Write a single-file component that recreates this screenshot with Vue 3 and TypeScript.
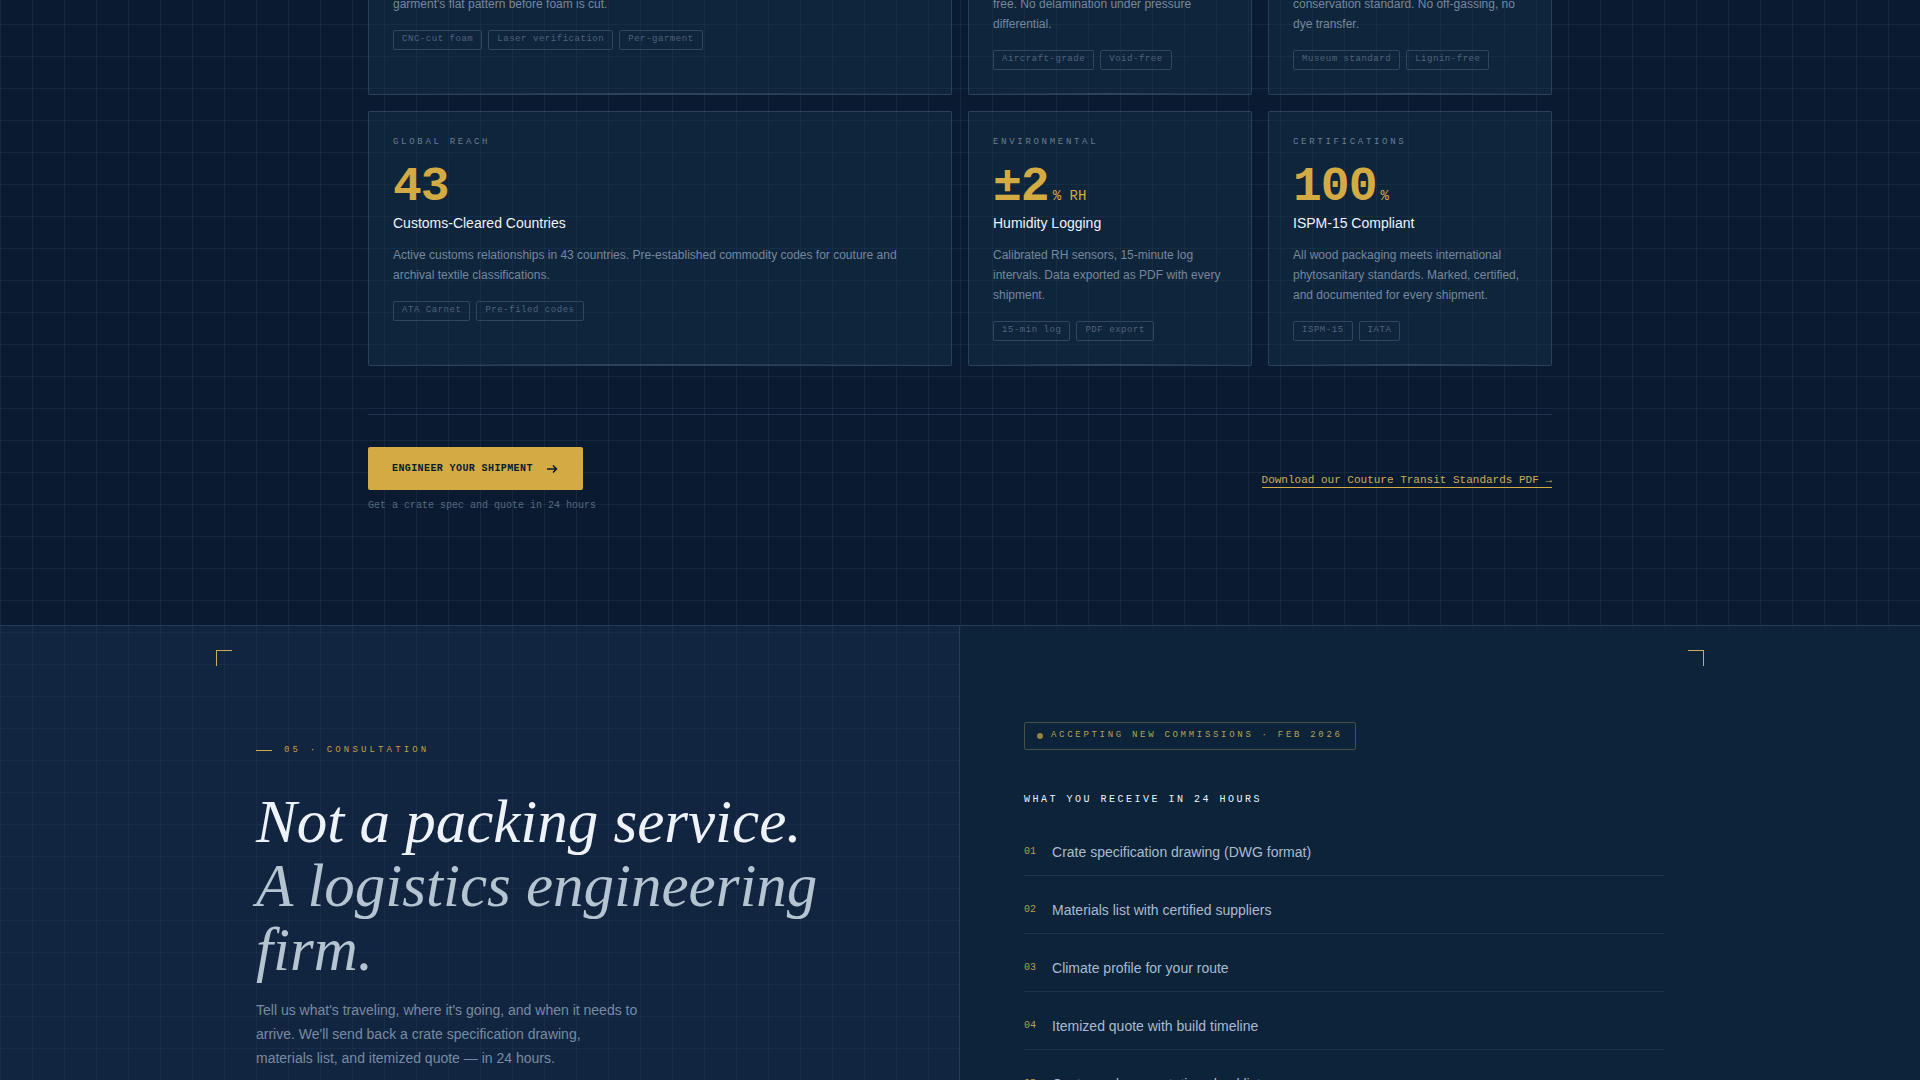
<script setup lang="ts">
interface Card {
  label?: string
  value?: string
  unit?: string
  title?: string
  text: string
  tags: string[]
  wide?: boolean
}

const topCards: Card[] = [
  {
    text: "garment's flat pattern before foam is cut.",
    tags: ['CNC-cut foam', 'Laser verification', 'Per-garment'],
    wide: true,
  },
  {
    text: 'free. No delamination under pressure differential.',
    tags: ['Aircraft-grade', 'Void-free'],
  },
  {
    text: 'conservation standard. No off-gassing, no dye transfer.',
    tags: ['Museum standard', 'Lignin-free'],
  },
]

const cards: Card[] = [
  {
    label: 'Global Reach',
    value: '43',
    title: 'Customs-Cleared Countries',
    text: 'Active customs relationships in 43 countries. Pre-established commodity codes for couture and archival textile classifications.',
    tags: ['ATA Carnet', 'Pre-filed codes'],
    wide: true,
  },
  {
    label: 'Environmental',
    value: '±2',
    unit: '% RH',
    title: 'Humidity Logging',
    text: 'Calibrated RH sensors, 15-minute log intervals. Data exported as PDF with every shipment.',
    tags: ['15-min log', 'PDF export'],
  },
  {
    label: 'Certifications',
    value: '100',
    unit: '%',
    title: 'ISPM-15 Compliant',
    text: 'All wood packaging meets international phytosanitary standards. Marked, certified, and documented for every shipment.',
    tags: ['ISPM-15', 'IATA'],
  },
]

const allCards: Card[] = [...topCards, ...cards]

const deliverables: string[] = [
  'Crate specification drawing (DWG format)',
  'Materials list with certified suppliers',
  'Climate profile for your route',
  'Itemized quote with build timeline',
  'Customs documentation checklist',
]
</script>

<template>
  <main class="page">
    <section class="specs">
      <div class="cards">
        <article v-for="(card, i) in allCards" :key="i" class="card" :class="{ wide: card.wide }">
          <p v-if="card.label" class="card-label">{{ card.label }}</p>
          <p v-if="card.value" class="card-value">
            {{ card.value }}<span v-if="card.unit" class="card-unit">{{ card.unit }}</span>
          </p>
          <h3 v-if="card.title" class="card-title">{{ card.title }}</h3>
          <p class="card-text">{{ card.text }}</p>
          <ul class="tags">
            <li v-for="tag in card.tags" :key="tag" class="tag">{{ tag }}</li>
          </ul>
        </article>
      </div>

      <div class="cta">
        <div class="cta-main">
          <button type="button" class="button">
            <span>Engineer your shipment</span>
            <svg class="arrow" viewBox="0 0 14 14" aria-hidden="true">
              <path d="M2 7h9.5M8 3.5 11.5 7 8 10.5" />
            </svg>
          </button>
          <p class="cta-note">Get a crate spec and quote in 24 hours</p>
        </div>
        <a class="download" href="#standards">Download our Couture Transit Standards PDF →</a>
      </div>
    </section>

    <section class="consult">
      <div class="panel panel-left">
        <div class="panel-body intro">
          <p class="eyebrow">05 · Consultation</p>
          <h2 class="headline">Not a packing service.<br /><span>A logistics engineering firm.</span></h2>
          <p class="lead">
            Tell us what's traveling, where it's going, and when it needs to arrive. We'll send back a
            crate specification drawing, materials list, and itemized quote — in 24 hours.
          </p>
        </div>
      </div>
      <div class="panel panel-right">
        <div class="panel-body offer">
          <p class="badge"><i class="dot"></i><span>Accepting new commissions · Feb 2026</span></p>
          <h3 class="offer-title">What you receive in 24 hours</h3>
          <ol class="list">
            <li v-for="(item, i) in deliverables" :key="item" class="list-item">
              <span class="list-number">0{{ i + 1 }}</span>
              <span>{{ item }}</span>
            </li>
          </ol>
        </div>
      </div>
      <div class="frame" aria-hidden="true">
        <i class="corner corner-left"></i>
        <i class="corner corner-right"></i>
      </div>
    </section>
  </main>
</template>

<style>
body {
  margin: 0;
  background: #0a1a30;
}
</style>

<style scoped>
.page {
  --gold: #d4aa43;
  --mono: "Liberation Mono", monospace;
  box-sizing: border-box;
  height: 100vh;
  overflow: hidden;
  font-family: "Liberation Sans", Arial, sans-serif;
  color: #eef3fa;
  background-color: #0a1b31;
  background-image:
    linear-gradient(rgba(160, 185, 205, 0.08) 1px, transparent 1px),
    linear-gradient(90deg, rgba(160, 185, 205, 0.08) 1px, transparent 1px);
  background-size: 32px 32px;
  background-position: 0 24px;
}

.page *,
.page *::before,
.page *::after {
  box-sizing: border-box;
}

p,
h2,
h3,
ul,
ol {
  margin: 0;
  padding: 0;
  font-weight: 400;
}

ul,
ol {
  list-style: none;
}

.specs {
  max-width: 1280px;
  margin: -31px auto 0;
  padding: 0 48px 111px;
}

.cards {
  display: grid;
  grid-template-columns: repeat(4, 1fr);
  gap: 16px;
}

.card {
  position: relative;
  padding: 24px;
  border: 1px solid rgba(130, 150, 180, 0.25);
  border-radius: 2px;
  background: rgba(23, 52, 77, 0.4);
}

.card.wide {
  grid-column: span 2;
}

.card::after {
  content: "";
  position: absolute;
  left: 0;
  right: 0;
  bottom: 0;
  height: 1px;
  background: linear-gradient(90deg, transparent, rgba(130, 150, 180, 0.3), transparent);
}

.card-label {
  margin-bottom: 15px;
  font: 9px/12px var(--mono);
  letter-spacing: 0.3em;
  text-transform: uppercase;
  color: #6b7d93;
}

.card-value {
  margin-bottom: 4px;
  font: 700 48px/48px var(--mono);
  letter-spacing: -0.02em;
  color: var(--gold);
}

.card-unit {
  margin-left: 4px;
  font-size: 14px;
  font-weight: 400;
  line-height: 14px;
  letter-spacing: 0;
}

.card-title {
  margin-bottom: 14px;
  font-size: 14px;
  line-height: 16px;
}

.card-text {
  margin-bottom: 16px;
  font-size: 12px;
  line-height: 20px;
  color: #76889d;
}

.tags {
  display: flex;
  flex-wrap: wrap;
  gap: 6px;
}

.tag {
  padding: 3px 8px 5px;
  border: 1px solid #30465e;
  border-radius: 2px;
  font: 9px/10px var(--mono);
  letter-spacing: 0.06em;
  color: #4f637a;
}

.cta {
  display: flex;
  align-items: center;
  justify-content: space-between;
  margin-top: 48px;
  padding-top: 32px;
  border-top: 1px solid rgba(130, 150, 180, 0.2);
}

.button {
  display: flex;
  align-items: center;
  gap: 12px;
  padding: 14px 24px;
  border: 0;
  border-radius: 2px;
  background: var(--gold);
  color: #0a1a30;
  font: 700 10px/15px var(--mono);
  letter-spacing: 0.04em;
  text-transform: uppercase;
}

.arrow {
  width: 14px;
  height: 14px;
  fill: none;
  stroke: currentColor;
  stroke-width: 1.5;
}

.cta-note {
  margin-top: 8px;
  font: 10px/16px var(--mono);
  color: #56687f;
}

.download {
  border-bottom: 1px solid var(--gold);
  font: 11px/14px var(--mono);
  color: #c9ae58;
  text-decoration: none;
}

.consult {
  position: relative;
  display: grid;
  grid-template-columns: 1fr 1fr;
  border-top: 1px solid #263b56;
}

.panel-left {
  display: flex;
  justify-content: flex-end;
  box-shadow: inset -1px 0 #263b56;
  background: rgba(29, 53, 88, 0.4);
}

.panel-right {
  background: rgba(13, 36, 58, 0.95);
}

.panel-body {
  width: 100%;
  max-width: 768px;
}

.intro {
  padding: 119px 64px 96px;
}

.offer {
  padding: 96px 64px;
}

.eyebrow {
  display: flex;
  align-items: center;
  gap: 12px;
  margin-bottom: 34px;
  font: 9px/11px var(--mono);
  letter-spacing: 0.35em;
  text-transform: uppercase;
  color: #c29f48;
}

.eyebrow::before {
  content: "";
  width: 16px;
  height: 1px;
  background: var(--gold);
}

.headline {
  margin-bottom: 16px;
  font: italic 400 61px/64px "Liberation Serif", "Times New Roman", serif;
}

.headline span {
  color: #b4c4d1;
}

.lead {
  max-width: 384px;
  font-size: 14px;
  line-height: 24px;
  color: #788ba2;
}

.badge {
  display: flex;
  align-items: center;
  gap: 8px;
  width: fit-content;
  height: 28px;
  margin-bottom: 44px;
  padding: 0 12px;
  border: 1px solid #475145;
  border-radius: 2px;
  font: 9px/12px var(--mono);
  letter-spacing: 0.3em;
  text-transform: uppercase;
  color: #b8a050;
}

.badge span {
  padding-bottom: 2px;
}

.dot {
  width: 6px;
  height: 6px;
  border-radius: 50%;
  background: #93843f;
}

.offer-title {
  margin-bottom: 24px;
  font: 10px/12px var(--mono);
  letter-spacing: 0.25em;
  text-transform: uppercase;
}

.list {
  display: grid;
  gap: 12px;
}

.list-item {
  display: flex;
  align-items: center;
  gap: 16px;
  padding: 12px 0;
  border-bottom: 1px solid #1d324b;
  font-size: 14px;
  line-height: 21px;
  color: #aabbd0;
}

.list-number {
  padding-bottom: 1px;
  font: 10px/12px var(--mono);
  color: #b99d4a;
}

.frame {
  position: absolute;
  top: 24px;
  left: 24px;
  right: 24px;
  display: flex;
  justify-content: space-between;
  max-width: 1488px;
  margin: 0 auto;
}

.corner {
  width: 16px;
  height: 16px;
  border-top: 1px solid #c9ad5c;
}

.corner-left {
  border-left: 1px solid #c9ad5c;
}

.corner-right {
  border-right: 1px solid #c9ad5c;
}
</style>
